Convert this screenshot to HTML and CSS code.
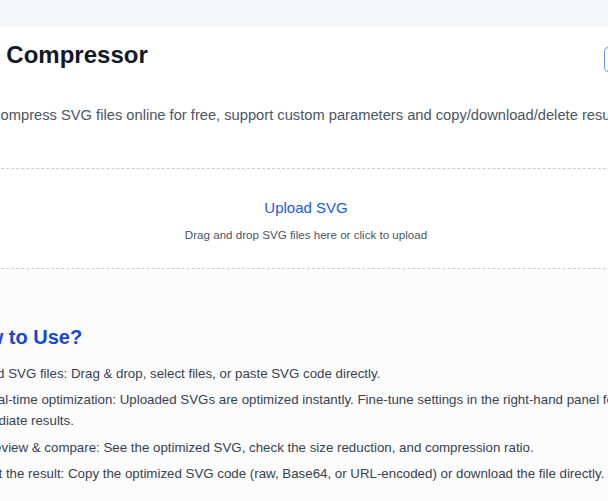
FILE: index.html
```html
<!DOCTYPE html>
<html lang="en">
<head>
<meta charset="utf-8">
<title>SVG Compressor</title>
<link rel="stylesheet" href="styles.css">
</head>
<body>
<div class="topbar"></div>
<main class="card">
  <header class="head">
    <h1 class="title">SVG Compressor</h1>
    <button class="lang" type="button">English</button>
  </header>
  <p class="desc">Compress SVG files online for free, support custom parameters and copy/download/delete results.</p>
  <section class="upload">
    <div class="upload-title">Upload SVG</div>
    <div class="upload-hint">Drag and drop SVG files here or click to upload</div>
  </section>
</main>
<section class="howto">
  <h2 class="howto-title">How to Use?</h2>
  <ol class="steps">
    <li>Add SVG files: Drag &amp; drop, select files, or paste SVG code directly.</li>
    <li>Real-time optimization: Uploaded SVGs are optimized instantly. Fine-tune settings in the right-hand panel for immediate results.</li>
    <li>Preview &amp; compare: See the optimized SVG, check the size reduction, and compression ratio.</li>
    <li>Get the result: Copy the optimized SVG code (raw, Base64, or URL-encoded) or download the file directly.</li>
  </ol>
</section>
</body>
</html>
```
FILE: styles.css
```css
html, body {
  margin: 0;
  padding: 0;
}
body {
  overflow: hidden;
  background: #fcfcfd;
  font-family: "Liberation Sans", Arial, Helvetica, sans-serif;
  color: #374151;
}
.topbar {
  height: 27px;
  background: #f6f7f9;
}
.card {
  background: #ffffff;
  margin-left: -64px;
  width: 740px;
}
.head {
  display: flex;
  align-items: flex-start;
  padding: 12px 8px 0 13px;
}
.title {
  margin: 0;
  font-size: 24px;
  line-height: 32px;
  font-weight: 700;
  color: #111827;
}
.lang {
  margin-left: auto;
  margin-top: 8px;
  width: 64px;
  height: 25px;
  border: 1px solid #6b98ef;
  border-radius: 4px;
  background: #fff;
  color: #2563eb;
  font-family: inherit;
  font-size: 13px;
}
.desc {
  margin: 32px 0 0;
  padding-left: 54px;
  font-size: 14.7px;
  line-height: 22px;
  color: #4b5563;
  white-space: nowrap;
}
.upload {
  margin-top: 42px;
  border-top: 1px dashed #c9cdd3;
  border-bottom: 1px dashed #c9cdd3;
  padding: 28px 0 25px;
  text-align: center;
}
.upload-title {
  font-size: 15px;
  line-height: 22px;
  color: #1d5bd8;
}
.upload-hint {
  margin-top: 6.5px;
  font-size: 11.6px;
  line-height: 17px;
  color: #4b5563;
}
.howto {
  padding-top: 54px;
  margin-left: -39px;
}
.howto-title {
  margin: 0;
  font-size: 20px;
  line-height: 28px;
  font-weight: 700;
  color: #1747d1;
}
.steps {
  margin: 12px 0 0 5px;
  padding: 0;
  width: 680px;
  list-style: decimal inside;
  font-size: 13.3px;
  line-height: 21px;
  color: #374151;
}
.steps li {
  margin-bottom: 5.5px;
}
```
